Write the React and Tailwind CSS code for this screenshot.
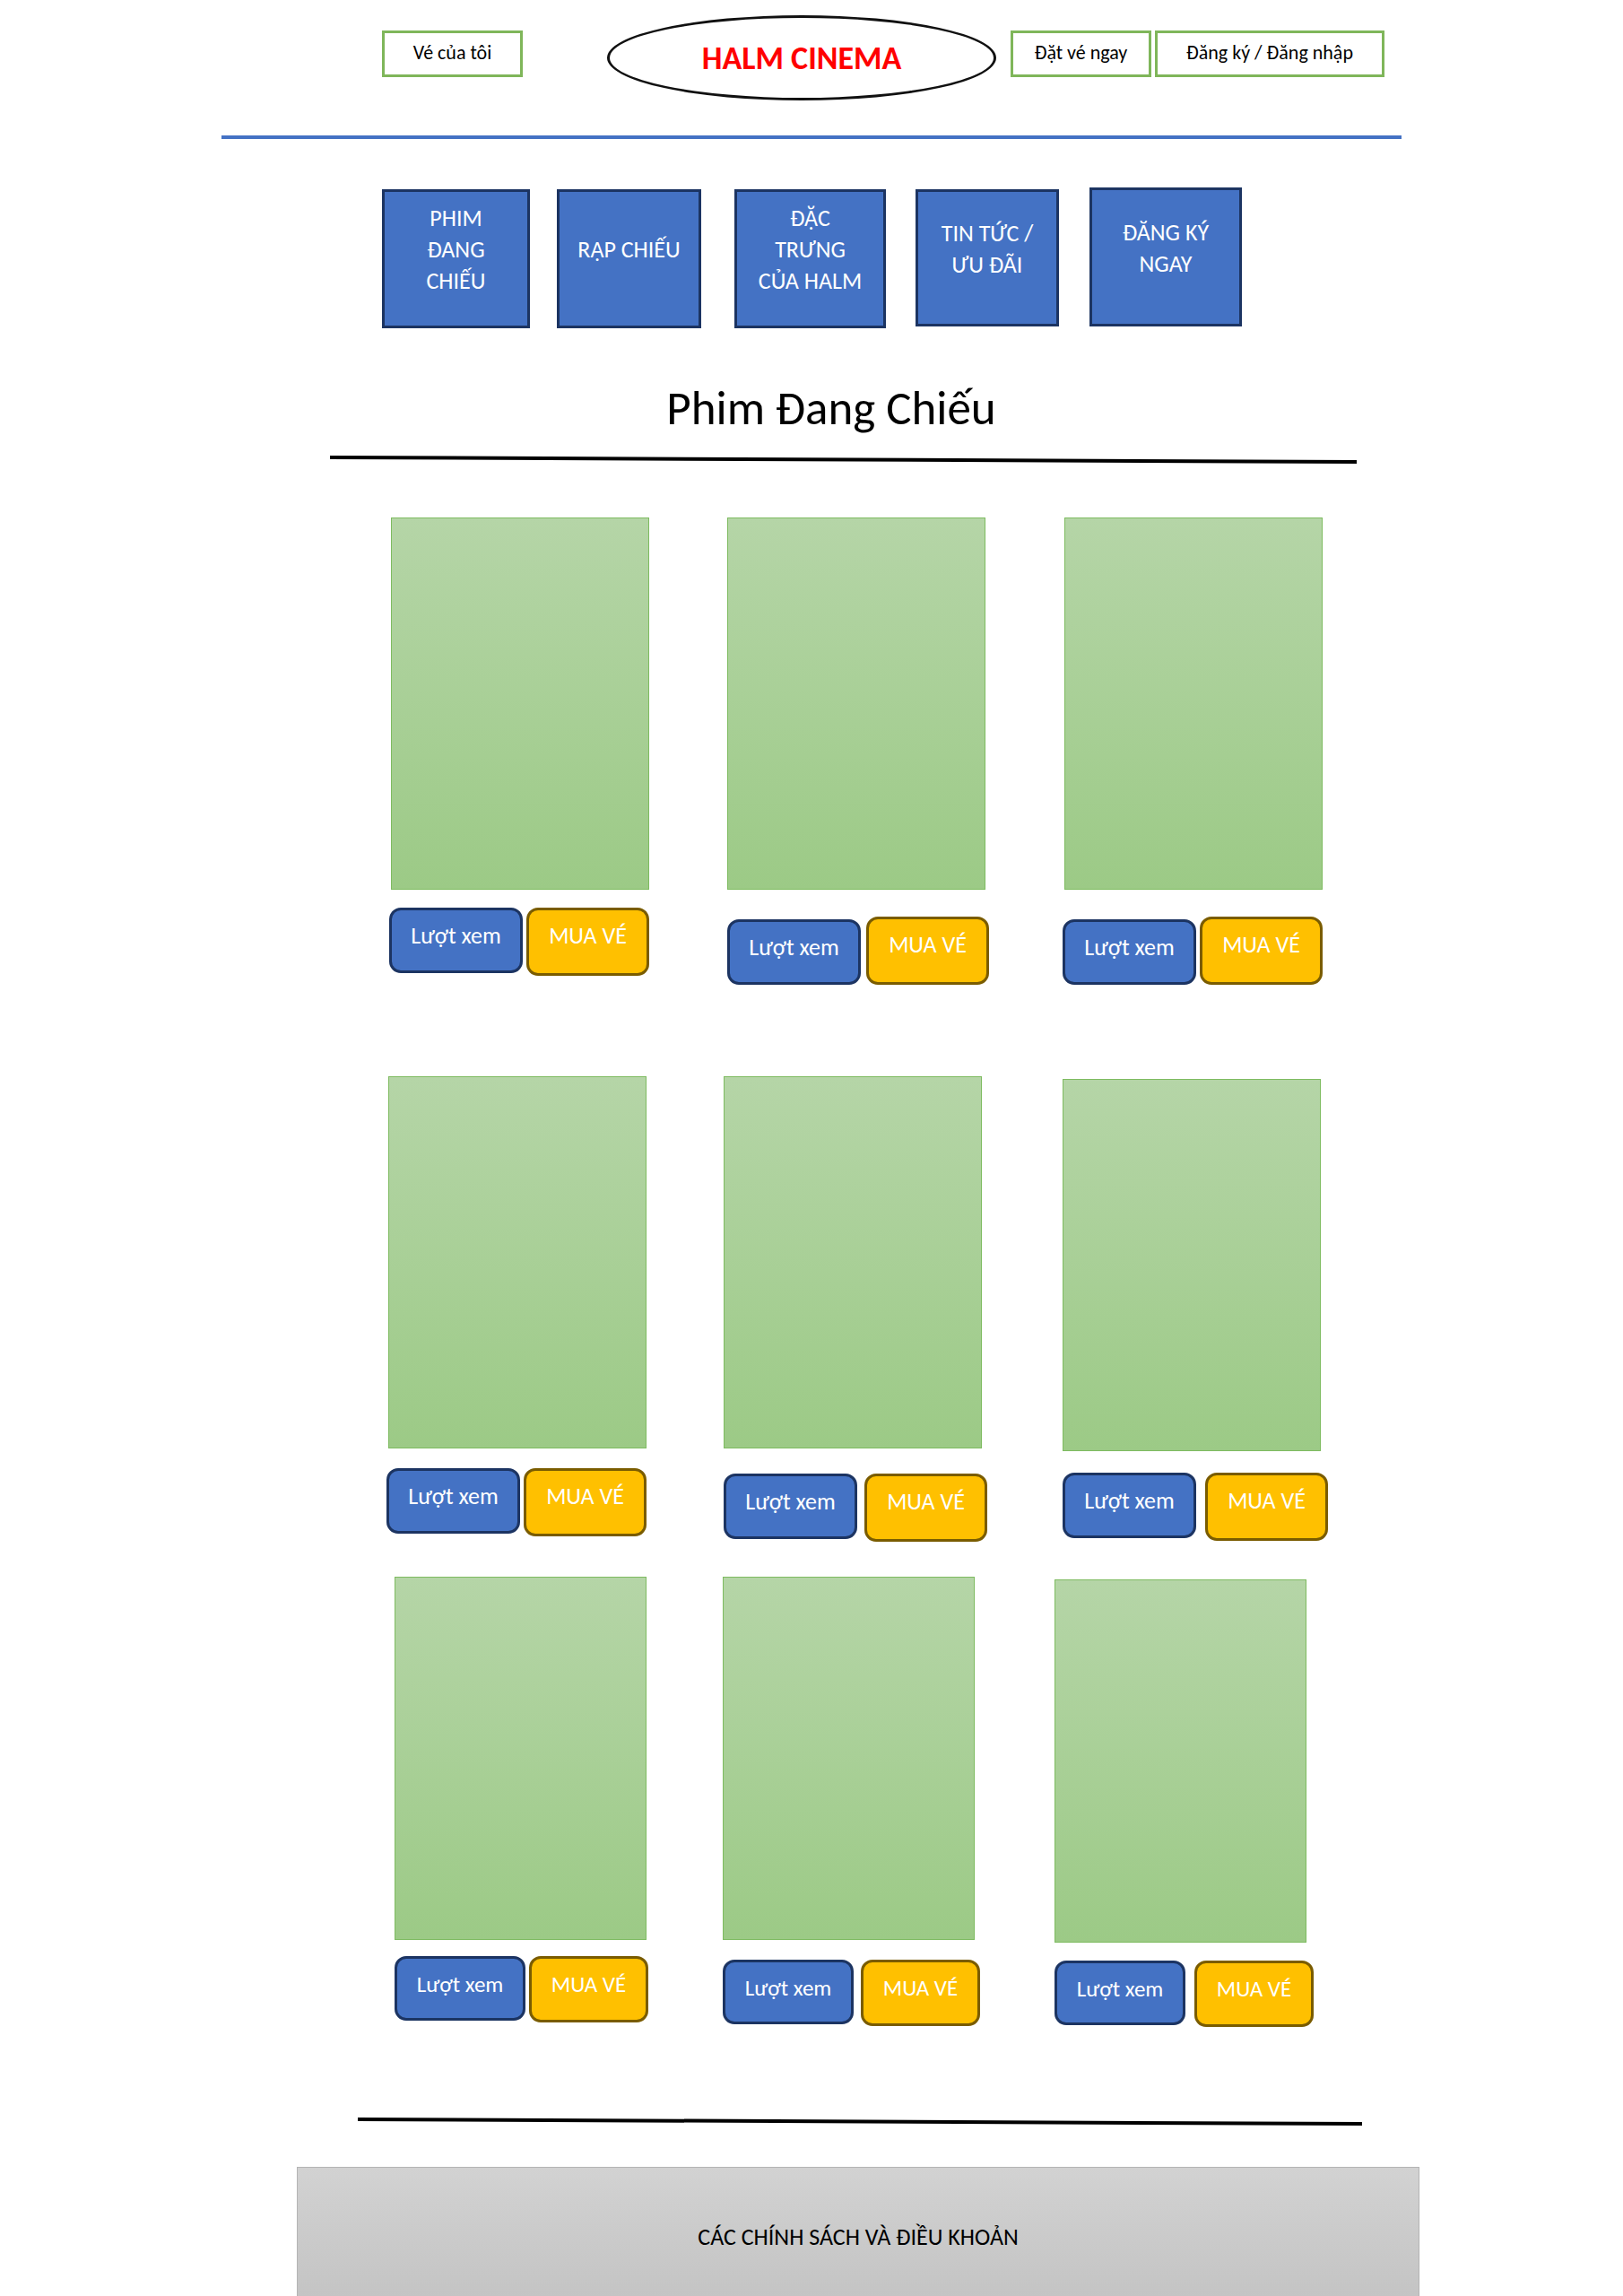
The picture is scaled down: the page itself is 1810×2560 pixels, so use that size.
import React from "react";

const navTiles = [
  { label: "PHIM ĐANG CHIẾU", box: "w-[165px] h-[155px] self-end px-8" },
  { label: "RẠP CHIẾU", box: "w-[161px] h-[155px] self-end px-4" },
  { label: "ĐẶC TRƯNG CỦA HALM", box: "w-[169px] h-[155px] self-end px-5" },
  { label: "TIN TỨC / ƯU ĐÃI", box: "w-[160px] h-[153px] self-center px-5" },
  { label: "ĐĂNG KÝ NGAY", box: "w-[170px] h-[155px] self-start px-5" },
];

const movieRows = [
  {
    row: "pl-[189px] grid-cols-[375px_376px_288px]",
    poster: "w-[288px] h-[415px]",
    views: "w-[149px] pb-[21px] text-[26px]",
    buy: "w-[137px] pb-6 text-[26px]",
    movies: [
      { card: "", actions: "mt-5 -ml-0.5 gap-1 items-start" },
      { card: "", actions: "mt-[30px] gap-1.5 items-end" },
      { card: "", actions: "mt-[30px] -ml-0.5 gap-1 items-end" },
    ],
  },
  {
    row: "mt-[102px] pl-[186px] grid-cols-[374px_378px_288px]",
    poster: "w-[288px] h-[415px]",
    views: "w-[149px] pb-[21px] text-[26px]",
    buy: "w-[137px] pb-6 text-[26px]",
    movies: [
      { card: "", actions: "mt-[22px] -ml-0.5 gap-1 items-start" },
      { card: "", actions: "mt-7 gap-2 items-start" },
      { card: "mt-[3px]", actions: "mt-6 gap-2.5 items-start" },
    ],
  },
  {
    row: "mt-[39px] pl-[193px] grid-cols-[366px_370px_281px]",
    poster: "w-[281px] h-[405px]",
    views: "w-[146px] pb-5 text-[25px]",
    buy: "w-[133px] pb-[22px] text-[25px]",
    movies: [
      { card: "", actions: "mt-[18px] gap-1 items-start" },
      { card: "", actions: "mt-[22px] gap-2 items-start" },
      { card: "mt-[3px]", actions: "mt-5 gap-2.5 items-start" },
    ],
  },
];

function OutlineLink({ className, children }) {
  return (
    <a
      href="#"
      className={`mb-[10px] flex h-[52px] shrink-0 items-center justify-center border-[3px] border-[#7fb65a] bg-white pb-0.5 text-[22px] leading-6 text-black ${className}`}
    >
      {children}
    </a>
  );
}

function SlantedRule({ className }) {
  return (
    <div className={className}>
      <svg viewBox="0 0 1000 9" preserveAspectRatio="none" className="block h-[9px] w-full" aria-hidden="true">
        <line x1="0" y1="2" x2="1000" y2="7" stroke="#000" strokeWidth="4" vectorEffect="non-scaling-stroke" />
      </svg>
    </div>
  );
}

function Movie({ card, actions, poster, views, buy }) {
  return (
    <article className={card}>
      <div className={`border border-[#7ebb60] bg-linear-to-b from-[#b5d5a7] to-[#9cca86] ${poster}`} />
      <div className={`flex w-max ${actions}`}>
        <button
          type="button"
          className={`rounded-[13px] border-[3px] border-[#1c3462] bg-[#4472c4] pt-[11px] text-center leading-[35px] text-white ${views}`}
        >
          Lượt xem
        </button>
        <button
          type="button"
          className={`rounded-[13px] border-[3px] border-[#7a5c00] bg-[#ffc000] pt-[11px] text-center leading-[35px] text-white ${buy}`}
        >
          MUA VÉ
        </button>
      </div>
    </article>
  );
}

export default function App() {
  return (
    <div className="overflow-x-hidden bg-white font-['Carlito','Lato','Noto_Sans',sans-serif] text-black">
      <div className="mx-auto max-w-[1316px]">
        <header className="flex items-center pl-[179px] pt-[17px]">
          <OutlineLink className="w-[157px]">Vé của tôi</OutlineLink>
          <h1 className="ml-[94px] flex h-[95px] w-[434px] shrink-0 items-center justify-center rounded-[50%] border-[3px] border-[#111] text-[36px] font-bold leading-10 text-[#ff0000]">
            HALM CINEMA
          </h1>
          <OutlineLink className="ml-4 w-[157px]">Đặt vé ngay</OutlineLink>
          <OutlineLink className="ml-1 w-[256px]">Đăng ký / Đăng nhập</OutlineLink>
        </header>
        <hr className="mt-[39px] h-1 border-0 bg-[#4472c4]" />

        <nav className="mt-[54px] grid h-[157px] grid-cols-[195px_198px_202px_194px_170px] pl-[179px]">
          {navTiles.map((tile) => (
            <a
              key={tile.label}
              href="#"
              className={`flex items-center justify-center border-[3px] border-[#1c3462] bg-[#4472c4] pb-5 text-center text-[26px] leading-[35px] text-white ${tile.box}`}
            >
              {tile.label}
            </a>
          ))}
        </nav>

        <main>
          <h2 className="mt-[59px] pl-11 text-center text-[53px] leading-[60px]">Phim Đang Chiếu</h2>
          <SlantedRule className="ml-[121px] mr-[50px] mt-[23px]" />
          <div className="mt-[60px]">
            {movieRows.map((row, r) => (
              <section key={r} className={`grid items-start ${row.row}`}>
                {row.movies.map((movie, m) => (
                  <Movie key={m} {...movie} poster={row.poster} views={row.views} buy={row.buy} />
                ))}
              </section>
            ))}
          </div>
          <SlantedRule className="ml-[152px] mr-[44px] mt-[101px]" />
        </main>
      </div>

      <div className="mx-auto mt-[46px] max-w-[1356px] pl-[104px]">
        <footer className="border-x border-t border-[#b4b4b4] bg-linear-to-b from-[#d2d2d2] to-[#c4c4c4] pb-[49px] pt-[60px] text-center text-[26px] leading-[35px]">
          CÁC CHÍNH SÁCH VÀ ĐIỀU KHOẢN
        </footer>
      </div>
    </div>
  );
}
